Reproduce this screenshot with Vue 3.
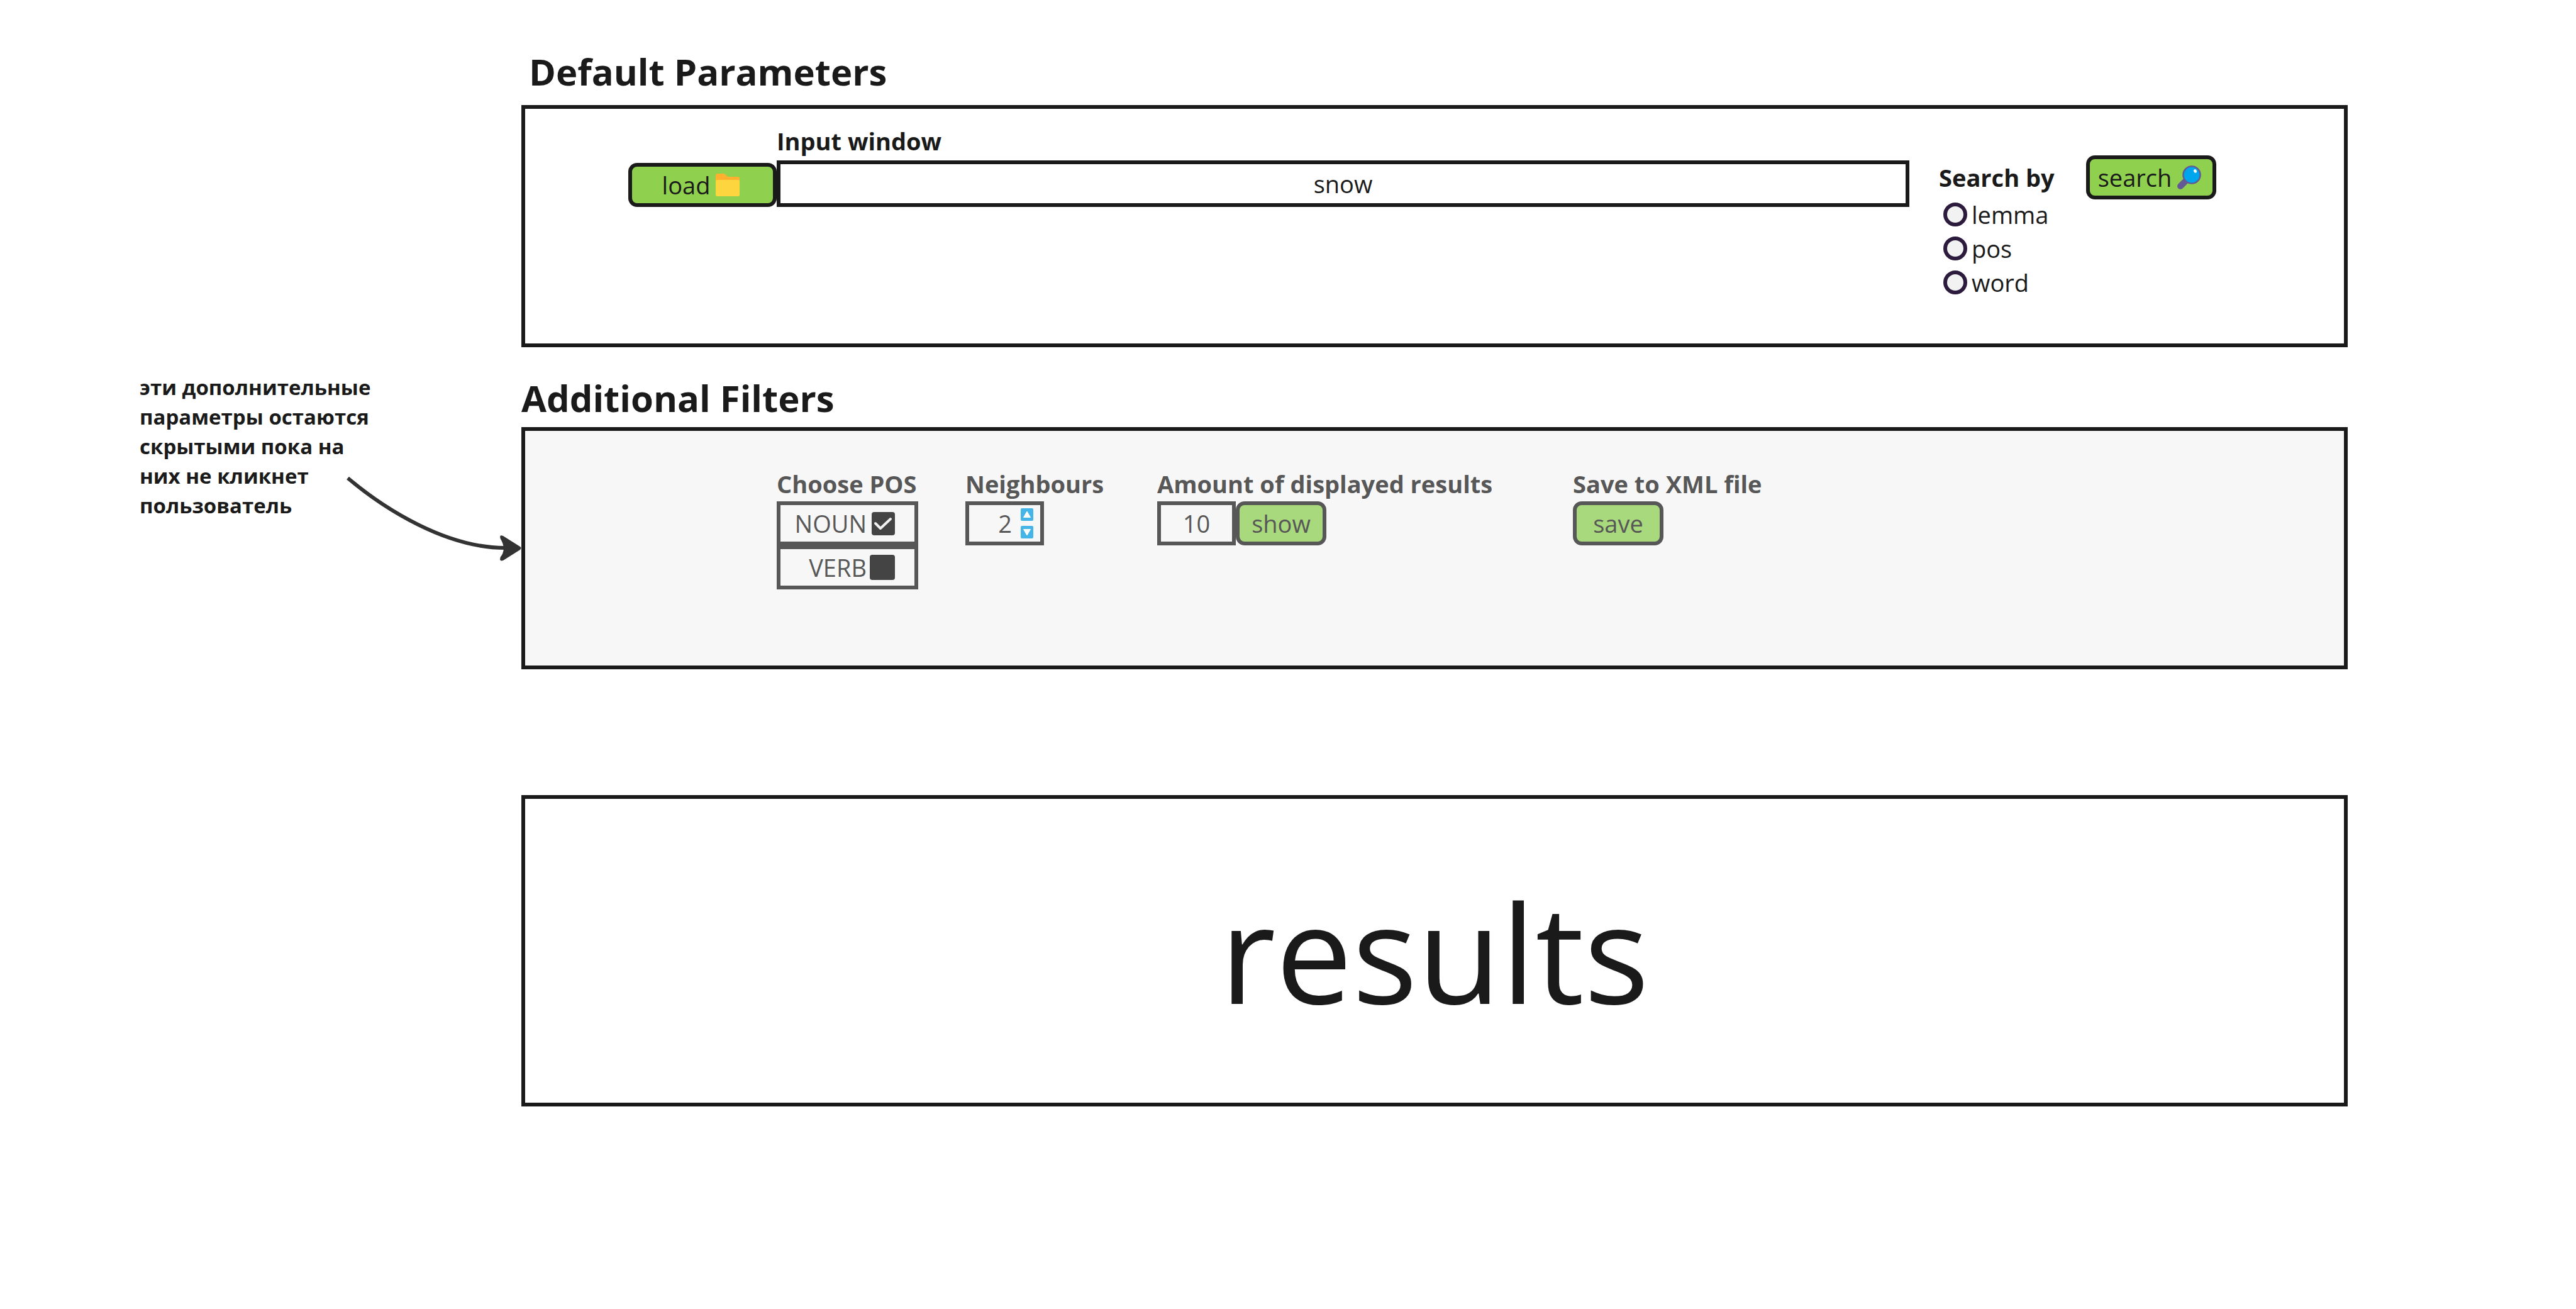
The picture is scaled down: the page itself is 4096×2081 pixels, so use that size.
<script setup>
import { ref } from 'vue'

const query = ref('snow')
const searchBy = ref('')
const fields = ['lemma', 'pos', 'word']
const noun = ref(true)
const verb = ref(false)
const neighbours = ref('2')
const amount = ref('10')
</script>

<template>
  <div class="page">
    <aside class="aside">
      <p class="note">эти дополнительные параметры остаются скрытыми пока на них не кликнет пользователь</p>
      <svg class="arrow" viewBox="0 0 280 144" aria-hidden="true">
        <path d="M4 11C62 60 160 122 254 122" fill="none" stroke="#333" stroke-width="6" />
        <path d="M252 123Q251 114 247 108Q244 100 251 103L278 120Q281 122 278 125L251 142Q244 144 247 136Q251 132 252 123Z" fill="#333" />
      </svg>
    </aside>

    <main class="main">
      <section>
        <h2 class="title inset">Default Parameters</h2>
        <form class="panel query" @submit.prevent>
          <button type="button" class="btn iconic load">
            load
            <svg width="38" height="36" viewBox="0 0 38 36" aria-hidden="true">
              <path d="M0 14V3Q0 0 3 0H12Q14 0 16 2L19 5H35Q38 5 38 8V14Z" fill="#ffb02e" />
              <rect y="10" width="38" height="26" rx="2" fill="#fcd53f" />
            </svg>
          </button>
          <div class="entry">
            <label class="label" for="query">Input window</label>
            <input id="query" v-model="query" class="box" type="text">
          </div>
          <fieldset class="by">
            <legend class="label">Search by</legend>
            <label v-for="f in fields" :key="f" class="option">
              <input v-model="searchBy" class="radio" type="radio" name="by" :value="f">
              {{ f }}
            </label>
          </fieldset>
          <button type="submit" class="btn iconic search">
            search
            <svg width="38" height="38" viewBox="0 0 38 38" aria-hidden="true">
              <path d="M12 26L5 33" stroke="#635994" stroke-width="10" stroke-linecap="round" />
              <circle cx="23" cy="15" r="13.6" fill="#00a6ed" stroke="#635994" stroke-width="2.4" />
              <ellipse cx="28.500" cy="9" rx="2.300" ry="3" transform="rotate(-30 28.500 9)" fill="#fff" />
            </svg>
          </button>
        </form>
      </section>

      <section class="filters">
        <h2 class="title">Additional Filters</h2>
        <form class="panel muted" @submit.prevent>
          <fieldset class="pos">
            <legend class="label">Choose POS</legend>
            <label class="box choice">
              NOUN
              <span class="tick">
                <input v-model="noun" class="check" type="checkbox">
                <svg v-if="noun" width="37" height="37" viewBox="0 0 37 37" aria-hidden="true">
                  <path d="M6 18L14 26L30 11" fill="none" stroke="#f2f2f2" stroke-width="4" stroke-linecap="round" stroke-linejoin="round" />
                </svg>
              </span>
            </label>
            <label class="box choice">
              VERB
              <span class="tick">
                <input v-model="verb" class="check large" type="checkbox">
              </span>
            </label>
          </fieldset>

          <div class="near">
            <label class="label" for="near">Neighbours</label>
            <div class="box stepper">
              <input id="near" v-model="neighbours" class="number" type="text" inputmode="numeric">
              <div class="arrows">
                <button type="button" class="step" aria-label="More">
                  <svg width="20" height="20" viewBox="0 0 20 20"><path d="M10 5L15.500 14.500H4.500Z" fill="#fff" stroke="#fff" stroke-linejoin="round" /></svg>
                </button>
                <button type="button" class="step" aria-label="Fewer">
                  <svg width="20" height="20" viewBox="0 0 20 20"><path d="M10 15L15.500 5.500H4.500Z" fill="#fff" stroke="#fff" stroke-linejoin="round" /></svg>
                </button>
              </div>
            </div>
          </div>

          <div class="amount">
            <label class="label" for="amount">Amount of displayed results</label>
            <div class="row">
              <input id="amount" v-model="amount" class="box short" type="text" inputmode="numeric">
              <button type="button" class="btn small">show</button>
            </div>
          </div>

          <div>
            <p class="label">Save to XML file</p>
            <button type="button" class="btn small">save</button>
          </div>
        </form>
      </section>

      <section class="panel results">results</section>
    </main>
  </div>
</template>

<style>
body {
  margin: 0;
  background: #fff;
}
</style>

<style scoped>
* {
  box-sizing: border-box;
}

.page {
  --ink: #1a1a1a;
  --fill: #8fd14f;
  display: flex;
  padding: 74px 363px 0 0;
  color: var(--ink);
  font: 400 38px/50px "Open Sans", sans-serif;
}

.aside {
  flex: none;
  width: 829px;
  padding-top: 518px;
}

.note {
  width: 380px;
  margin: 0 0 0 222px;
  font-size: 33px;
  font-weight: 700;
  line-height: 47px;
}

.arrow {
  display: block;
  width: 280px;
  height: 144px;
  margin: -78px 0 0 549px;
}

.main {
  flex: 1;
  min-width: 0;
}

.title {
  margin: 0 0 6px;
  font-size: 58px;
  font-weight: 700;
  line-height: 80px;
}

.inset {
  margin-bottom: 13px;
  padding-left: 12px;
}

.panel {
  display: flex;
  align-items: flex-start;
  min-height: 385px;
  border: 6px solid var(--ink);
}

.label {
  display: block;
  margin: 0;
  padding: 0;
  font-weight: 700;
}

fieldset {
  min-width: 0;
  margin: 0;
  padding: 0;
  border: 0;
}

.btn,
.box,
.number {
  margin: 0;
  color: inherit;
  font: inherit;
}

.btn {
  display: flex;
  align-items: center;
  justify-content: center;
  gap: 9px;
  height: 70px;
  padding: 0;
  border: 6px solid var(--ink);
  border-radius: 14px;
  background: var(--fill);
}

.iconic {
  padding-right: 5px;
}

.box {
  display: block;
  height: 70px;
  padding: 0;
  border: 6px solid var(--ink);
  border-radius: 0;
  background: transparent;
  text-align: center;
}

.query {
  padding: 26px 203px 0 164px;
}

.load {
  width: 236px;
  margin-top: 60px;
}

.entry {
  flex: 1;
  min-width: 0;
}

.entry .box {
  width: 100%;
  height: 74px;
  margin-top: 6px;
}

.by {
  width: 234px;
  margin: 58px 0 0 47px;
}

.by .label {
  margin-bottom: 7px;
}

.option {
  display: flex;
  align-items: center;
  gap: 7px;
  height: 54px;
  padding-left: 7px;
}

.radio {
  appearance: none;
  width: 38px;
  height: 38px;
  margin: 0;
  border: 6px solid #2d1b3d;
  border-radius: 50%;
  background: #f2f2f2;
}

.radio:checked {
  box-shadow: inset 0 0 0 6px #f2f2f2;
  background: #2d1b3d;
}

.search {
  width: 207px;
  margin-top: 48px;
}

.filters {
  margin-top: 41px;
}

.muted {
  padding: 59px 164px 0 400px;
  background: #f7f7f7;
  color: #575757;
}

.muted .label {
  margin-bottom: 3px;
}

.muted .btn,
.muted .box {
  border-color: #575757;
}

.muted .btn {
  background: #a9d97d;
}

.pos {
  width: 225px;
}

.choice {
  display: flex;
  align-items: center;
  justify-content: flex-end;
  gap: 5px;
  padding-right: 31px;
}

.tick {
  display: grid;
  justify-items: end;
  width: 40px;
}

.tick > * {
  grid-area: 1 / 1;
}

.check {
  appearance: none;
  width: 37px;
  height: 37px;
  margin: 0;
  border-radius: 4px;
  background: #444;
}

.large {
  width: 40px;
  height: 40px;
}

.near {
  width: 230px;
  margin-left: 75px;
}

.stepper {
  display: flex;
  align-items: center;
  width: 125px;
}

.number {
  width: 68px;
  height: 50px;
  padding: 0;
  border: 0;
  background: transparent;
  text-align: right;
}

.arrows {
  display: grid;
  gap: 8px;
  margin-left: 14px;
}

.step {
  display: block;
  width: 20px;
  height: 20px;
  padding: 0;
  border: 0;
  border-radius: 2px;
  background: #45b5e8;
}

.step svg {
  display: block;
}

.amount {
  width: 661px;
  margin-left: 75px;
}

.row {
  display: flex;
}

.short {
  width: 125px;
}

.small {
  width: 144px;
}

.results {
  align-items: center;
  justify-content: center;
  height: 495px;
  margin-top: 200px;
  font-size: 217px;
  line-height: 300px;
}
</style>
